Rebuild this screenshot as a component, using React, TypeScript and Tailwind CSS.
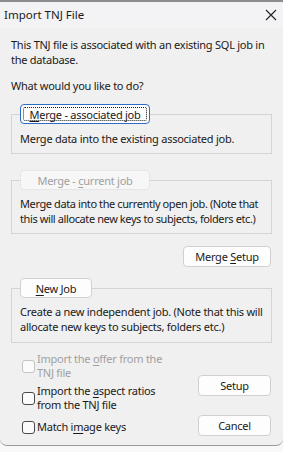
import React from "react";

const font = { fontFamily: '"Segoe UI", "Noto Sans", "Open Sans", sans-serif' };

function Underlined({ text, at }: { text: string; at: number }) {
  return (
    <span>
      {text.slice(0, at)}
      <span className="underline underline-offset-2">{text[at]}</span>
      {text.slice(at + 1)}
    </span>
  );
}

function GroupButton({
  children,
  width,
  disabled,
  focused,
}: {
  children: React.ReactNode;
  width: string;
  disabled?: boolean;
  focused?: boolean;
}) {
  return (
    <div
      className={`relative z-10 ml-[9px] flex h-[20px] items-center justify-center rounded-[4px] border text-[11px] ${width} ${
        focused
          ? "border-[#2c6fc2] bg-[#fdfdfd] text-[#1a1a1a]"
          : disabled
          ? "border-[#e6e6e6] bg-[#f7f7f7] text-[#a0a0a0]"
          : "border-[#d0d0d0] bg-[#fdfdfd] text-[#1a1a1a]"
      }`}
    >
      {focused && (
        <div className="absolute inset-[2px] rounded-[2px] border border-dotted border-[#222]" />
      )}
      {children}
    </div>
  );
}

function Checkbox({ disabled }: { disabled?: boolean }) {
  return (
    <div
      className={`h-[13px] w-[13px] shrink-0 rounded-[3px] border bg-[#fbfbfb] ${
        disabled ? "border-[#c4c4c4]" : "border-[#4a4a4a]"
      }`}
    />
  );
}

function Button({ children, width }: { children: React.ReactNode; width: string }) {
  return (
    <div
      className={`flex h-[21px] items-center justify-center rounded-[4px] border border-[#d0d0d0] bg-[#fdfdfd] text-[11px] text-[#1a1a1a] ${width}`}
    >
      {children}
    </div>
  );
}

export default function App() {
  return (
    <div className="h-[452px] w-[283px] bg-[#f8f8f8]" style={font}>
      <div className="h-[446px] w-[283px] overflow-hidden rounded-b-[7px] border-b border-[#9a9a9a] bg-[#f0f0f0]">
        <div className="h-[2px] bg-[#8c8c8c]" />
        <div className="flex h-[26px] items-center justify-between bg-[#f3f3f5] pl-[4px] pr-[6px] text-[11.5px] text-[#1a1a1a]">
          <span>Import TNJ File</span>
          <svg width="12" height="12" viewBox="0 0 12 12">
            <path d="M1 1L11 11M11 1L1 11" stroke="#222" strokeWidth="1.1" />
          </svg>
        </div>

        <div className="px-[11px] pt-[9px] text-[11px] leading-[15px] tracking-[-0.25px] text-[#1a1a1a]">
          <p>This TNJ file is associated with an existing SQL job in the database.</p>
          <p className="mt-[11px]">What would you like to do?</p>

          <div className="mt-[11px]">
            <GroupButton width="w-[130px]" focused>
              <Underlined text="Merge - associated job" at={0} />
            </GroupButton>
            <div className="-mt-[10px] h-[40px] border border-[#d4d4d4] px-[8px] pt-[16px]">
              Merge data into the existing associated job.
            </div>
          </div>

          <div className="mt-[16px]">
            <GroupButton width="w-[130px]" disabled>
              <Underlined text="Merge - current job" at={8} />
            </GroupButton>
            <div className="-mt-[10px] h-[54px] border border-[#d4d4d4] px-[8px] pt-[15px] tracking-[-0.4px] whitespace-nowrap">
              <div>Merge data into the currently open job. (Note that</div>
              <div>this will allocate new keys to subjects, folders etc.)</div>
            </div>
          </div>

          <div className="mt-[12px] flex justify-end pr-[1px]">
            <Button width="w-[88px]">
              <Underlined text="Merge Setup" at={6} />
            </Button>
          </div>

          <div className="mt-[11px]">
            <GroupButton width="w-[72px]">
              <Underlined text="New Job" at={0} />
            </GroupButton>
            <div className="-mt-[10px] h-[55px] border border-[#d4d4d4] px-[8px] pt-[15px]">
              Create a new independent job. (Note that this will allocate new keys to subjects, folders etc.)
            </div>
          </div>

          <div className="mt-[9px] flex pl-[11px] pr-[1px]">
            <div className="flex w-[160px] flex-col">
              <div className="flex items-center gap-[2px] leading-[14px] text-[#a0a0a0]">
                <Checkbox disabled />
                <span>
                  <Underlined text="Import the offer from the" at={11} />
                  <br />
                  TNJ file
                </span>
              </div>
              <div className="mt-[4px] flex items-center gap-[2px] leading-[14px]">
                <Checkbox />
                <span>
                  <Underlined text="Import the aspect ratios" at={11} />
                  <br />
                  from the TNJ file
                </span>
              </div>
              <div className="mt-[8px] flex items-center gap-[2px] leading-[14px]">
                <Checkbox />
                <Underlined text="Match image keys" at={7} />
              </div>
            </div>
            <div className="ml-auto flex flex-col pt-[23px]">
              <Button width="w-[73px]">Setup</Button>
              <div className="mt-[19px]">
                <Button width="w-[73px]">Cancel</Button>
              </div>
            </div>
          </div>
        </div>
      </div>
    </div>
  );
}
